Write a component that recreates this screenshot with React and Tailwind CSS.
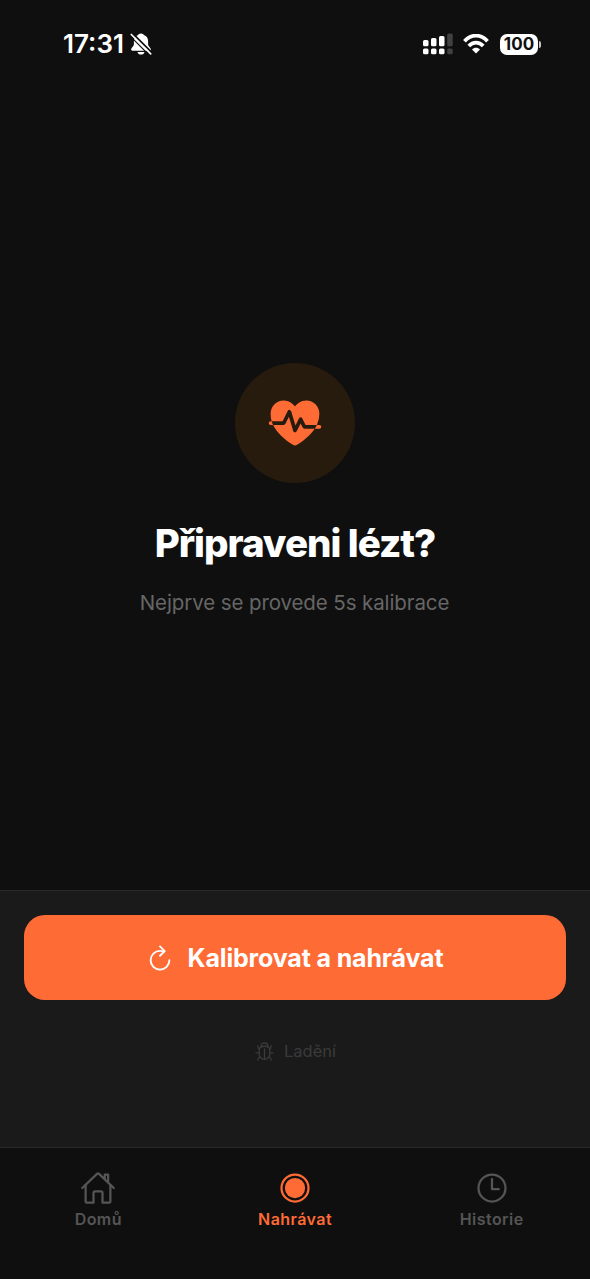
import { IoFitness, IoRefreshOutline, IoBugOutline, IoHomeOutline, IoRadioButtonOn, IoTimeOutline } from "react-icons/io5";

function StatusBar() {
  return (
    <header className="flex h-[88px] shrink-0 items-center justify-between pl-[63px] pr-[49px] text-white">
      <div className="flex items-center gap-[6px]">
        <span className="text-[26px] leading-[30px] font-semibold">17:31</span>
        <svg className="h-[24px] w-[22px]" viewBox="0 0 22 24" fill="none">
          <path d="M11 1.500c-1.700 0-2.600.8-2.900 1.600C5.300 4 3.900 6.300 3.900 9v3.500c0 1.700-2.800 3.200-2.800 5 0 .8.500 1.200 1.300 1.200h17.200c.8 0 1.300-.4 1.300-1.200 0-1.800-2.800-3.300-2.800-5V9c0-2.700-1.400-5-4.200-5.900-.3-.8-1.200-1.600-2.900-1.600Z" fill="white" />
          <path d="M7.500 20h7c-.3 1.600-1.700 2.600-3.500 2.600S7.800 21.600 7.500 20Z" fill="white" />
          <path d="M2.800 1.600 21.600 20.400" stroke="#0f0f0f" strokeWidth="2" />
          <path d="M1.300 2.500 20.700 21.900" stroke="white" strokeWidth="1.700" strokeLinecap="round" />
          <path d="M.2 4.200 18.600 22.600" stroke="#0f0f0f" strokeWidth="1.200" />
        </svg>
      </div>
      <div className="flex items-center">
        <svg className="h-[22px] w-[30px]" viewBox="0 0 30 22" fill="white">
          <rect x="0" y="7" width="5.500" height="6.200" rx="1.500" />
          <rect x="8" y="5" width="5.500" height="8.200" rx="1.500" />
          <rect x="16" y="3" width="5.500" height="10.200" rx="1.500" />
          <rect x="24.200" y="0.500" width="5.500" height="12.700" rx="1.500" fill="#414141" />
          <rect x="0" y="15.500" width="5.500" height="5.700" rx="1.500" />
          <rect x="8" y="15.500" width="5.500" height="5.700" rx="1.500" />
          <rect x="16" y="15.500" width="5.500" height="5.700" rx="1.500" />
          <rect x="24.200" y="15.500" width="5.500" height="5.700" rx="1.500" fill="#414141" />
        </svg>
        <svg className="mr-px ml-[10px] h-[20px] w-[26px]" viewBox="0 0 26 20" fill="none" stroke="white" strokeWidth="3.700">
          <path d="M1.500 7.300C8-.3 18-.3 24.500 7.300" />
          <path d="M5.800 12c4.200-4.500 10.200-4.500 14.400 0" />
          <path d="M13 19.400 9 15.400c2.200-2.300 5.800-2.300 8 0Z" fill="white" stroke="none" />
        </svg>
        <div className="ml-[10px] flex h-[21px] w-[38px] items-center justify-center rounded-[7px] bg-white text-[17px] leading-[21px] font-bold text-[#101010]">100</div>
        <div className="ml-[1px] h-[7px] w-[2px] rounded-r-full bg-[#c8c8c8]" />
      </div>
    </header>
  );
}

function Tab({ icon: Icon, label, active }) {
  return (
    <button className={`flex flex-1 flex-col items-center ${active ? "text-[#ff6b35]" : "text-[#555555]"}`}>
      <Icon className="size-[36px]" />
      <span className="mt-[3px] text-[16px] leading-[20px] font-semibold tracking-[0.45px]">{label}</span>
    </button>
  );
}

export default function App() {
  return (
    <div className="flex h-[1279px] w-[590px] flex-col overflow-hidden bg-[#0f0f0f] font-['Inter',sans-serif]">
      <StatusBar />
      <main className="flex flex-1 flex-col items-center pt-[275px]">
        <div className="flex size-[120px] items-center justify-center rounded-full bg-[#271b0e]">
          <IoFitness className="size-[60px] text-[#ff6b35]" />
        </div>
        <h1 className="mt-[36px] text-[38.500px] leading-[48px] font-extrabold tracking-[-1px] whitespace-nowrap text-white">Připraveni lézt?</h1>
        <p className="mt-[22px] pr-px text-[20.500px] leading-[28px] tracking-[-0.1px] whitespace-nowrap text-[#666666]">Nejprve se provede 5s kalibrace</p>
      </main>
      <section className="flex h-[257px] shrink-0 flex-col items-center border-t-[1.5px] border-[#2a2a2a] bg-[#1a1a1a] px-[24px] pt-[24px]">
        <button className="flex h-[85px] w-full items-center justify-center gap-[13px] rounded-[21px] bg-[#ff6b35] pr-[2px] text-white">
          <IoRefreshOutline className="size-[30px]" />
          <span className="text-[25px] leading-[32px] font-bold tracking-[-0.15px] whitespace-nowrap">Kalibrovat a nahrávat</span>
        </button>
        <button className="mt-[41px] flex items-center gap-[9px] text-[#3a3a3a]">
          <IoBugOutline className="size-[21px]" />
          <span className="text-[16.500px] leading-[21px]">Ladění</span>
        </button>
      </section>
      <nav className="flex h-[132px] shrink-0 border-t-[1.5px] border-[#2a2a2a] pt-[22px]">
        <Tab icon={IoHomeOutline} label="Domů" />
        <Tab icon={IoRadioButtonOn} label="Nahrávat" active />
        <Tab icon={IoTimeOutline} label="Historie" />
      </nav>
    </div>
  );
}
